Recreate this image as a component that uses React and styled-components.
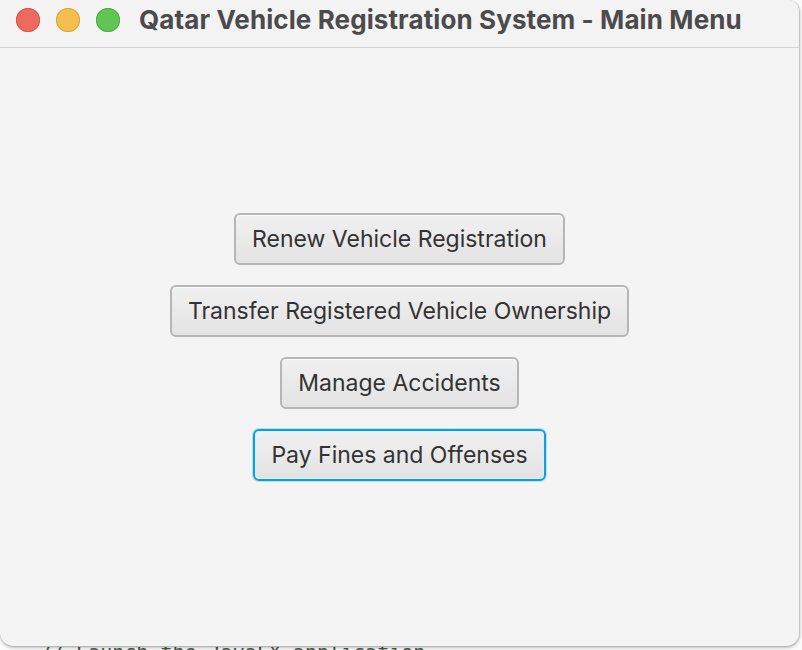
import React from 'react';
import styled, { createGlobalStyle } from 'styled-components';

const GlobalStyle = createGlobalStyle`
  html, body {
    margin: 0;
    padding: 0;
    background: #fdfdfd;
  }
  #root {
    width: 802px;
    height: 650px;
    overflow: hidden;
  }
`;

const Desktop = styled.div`
  position: relative;
  width: 802px;
  height: 650px;
  background: #fbfbfb;
  overflow: hidden;
  font-family: Inter, "Noto Sans", sans-serif;
`;

// editor text peeking out under the window
const BehindCode = styled.div`
  position: absolute;
  left: 40px;
  bottom: -14px;
  font-family: "DejaVu Sans Mono", monospace;
  font-size: 20px;
  color: #3c5a40;
  white-space: pre;
`;

const Window = styled.div`
  position: relative;
  z-index: 1;
  width: 800px;
  height: 647px;
  display: flex;
  flex-direction: column;
  background: #f4f4f4;
  border-right: 1px solid #c4c4c4;
  border-bottom: 1px solid #b8b8b8;
  border-radius: 0 12px 14px 14px;
  box-shadow: 0 1px 3px rgba(0, 0, 0, 0.25);
  box-sizing: border-box;
  overflow: hidden;
`;

const TitleBar = styled.div`
  height: 48px;
  flex-shrink: 0;
  display: flex;
  align-items: center;
  padding: 0 0 8px 16px;
  background: #f3f3f3;
  border-bottom: 1px solid #d4d4d4;
  box-sizing: border-box;
`;

const Lights = styled.div`
  display: flex;
  gap: 16px;
  margin-right: 19px;
`;

const Light = styled.span`
  width: 24px;
  height: 24px;
  border-radius: 50%;
  background: ${(p) => p.color};
  box-shadow: inset 0 0 0 1px ${(p) => p.edge};
`;

const Title = styled.div`
  font-size: 26px;
  font-weight: 700;
  color: #4b4b4b;
  letter-spacing: 0.1px;
  white-space: nowrap;
`;

const Content = styled.div`
  flex: 1;
  display: flex;
  flex-direction: column;
  align-items: center;
  justify-content: center;
  gap: 20px;
`;

const MenuButton = styled.button`
  height: 52px;
  padding: 0 16px;
  font-family: Inter, "Noto Sans", sans-serif;
  font-size: 23px;
  color: #333333;
  background: linear-gradient(#f0f0f0, #e3e3e3);
  border: 2px solid ${(p) => (p.focused ? '#0ea0d6' : '#b6b6b6')};
  border-radius: 6px;
  box-shadow: ${(p) =>
    p.focused
      ? 'inset 0 0 0 1px #d6eef8, 0 0 0 1px rgba(14,160,214,0.25)'
      : 'inset 0 1px 0 #fafafa'};
  cursor: default;
`;

const items = [
  'Renew Vehicle Registration',
  'Transfer Registered Vehicle Ownership',
  'Manage Accidents',
  'Pay Fines and Offenses',
];

export default function App() {
  return (
    <Desktop>
      <GlobalStyle />
      <BehindCode>{'// Launch the JavaFX application'}</BehindCode>
      <Window>
        <TitleBar>
          <Lights>
            <Light color="#ee6a5f" edge="#d9564b" />
            <Light color="#f5bf4f" edge="#dea53a" />
            <Light color="#61c554" edge="#4fae43" />
          </Lights>
          <Title>Qatar Vehicle Registration System - Main Menu</Title>
        </TitleBar>
        <Content>
          {items.map((label, i) => (
            <MenuButton key={label} focused={i === items.length - 1}>
              {label}
            </MenuButton>
          ))}
        </Content>
      </Window>
    </Desktop>
  );
}
